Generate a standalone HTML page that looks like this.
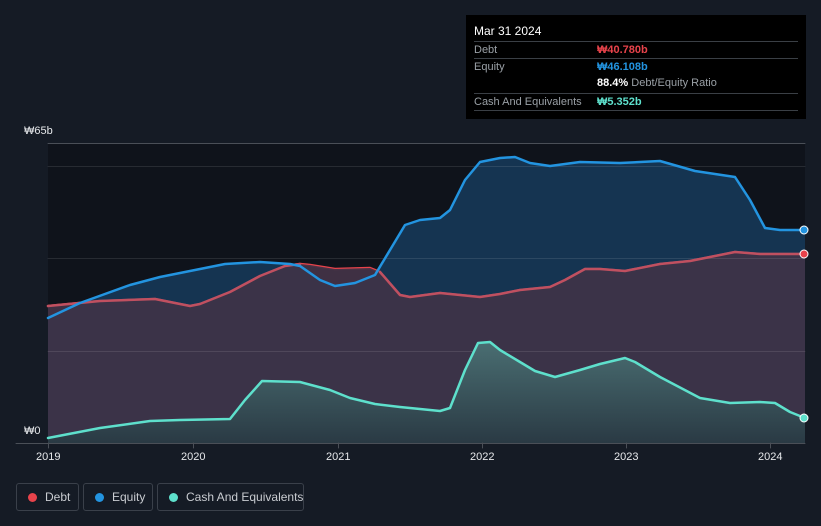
<!DOCTYPE html>
<html><head><meta charset="utf-8"><style>
html,body{margin:0;width:821px;height:526px;background:#151b25;font-family:"Liberation Sans","Noto Sans CJK KR",sans-serif;overflow:hidden;position:relative}
.tip{position:absolute;left:466px;top:15px;width:340px;height:104px;background:#000;color:#fff;font-size:11px}
.tip .r{position:absolute;left:8px;right:8px;height:17px;border-top:1px solid #3a3f45;color:#9aa0a6}
.tip span{position:absolute;left:123px}
.lg{position:absolute;top:483px;height:28px;border:1px solid #3a404a;border-radius:3px;color:#c9ccd1;font-size:12px;line-height:26px;box-sizing:border-box;white-space:nowrap}
.lg i{position:absolute;left:11px;top:9px;width:9px;height:9px;border-radius:50%}
.ax{position:absolute;color:#e6e8eb;font-size:11px}
</style></head><body>
<svg width="821" height="526" style="position:absolute;left:0;top:0" stroke-linejoin="round" stroke-linecap="round">
<rect x="48" y="143" width="757" height="300" fill="#0f131b"/>
<defs>
<linearGradient id="cg" x1="0" y1="0" x2="0" y2="1"><stop offset="0" stop-color="#4a6e72"/><stop offset="1" stop-color="#2a3a44"/></linearGradient>
</defs>
<path d="M48,306 L100,301 L155,299 L175,303 L190,306 L200,304 L230,292 L260,276 L285,266 L300,264 L310,265 L335,269 L370,268 L380,272 L400,295 L410,297 L440,293 L480,297 L500,294 L520,290 L550,287 L565,280 L585,269 L600,269 L625,271 L660,264 L690,261 L700,259 L735,252 L760,254 L805,254 L805,443 L48,443Z" fill="#5a2630"/>
<path d="M48,306 L100,301 L155,299 L175,303 L190,306 L200,304 L230,292 L260,276 L285,266 L300,264 L310,265 L335,269 L370,268 L380,272 L400,295 L410,297 L440,293 L480,297 L500,294 L520,290 L550,287 L565,280 L585,269 L600,269 L625,271 L660,264 L690,261 L700,259 L735,252 L760,254 L805,254" fill="none" stroke="#e8434b" stroke-width="2.5"/>
<path d="M48,318 L80,303 L130,285 L160,277 L190,271 L225,264 L260,262 L290,264 L300,266 L320,280 L335,286 L355,283 L375,275 L390,250 L405,225 L420,220 L440,218 L450,210 L465,180 L480,162 L500,158 L515,157 L530,163 L550,166 L580,162 L620,163 L660,161 L695,171 L735,177 L750,200 L765,228 L780,230 L805,230 L805,443 L48,443Z" fill="rgba(27,80,125,0.55)"/>
<path d="M48,306 L100,301 L155,299 L175,303 L190,306 L200,304 L230,292 L260,276 L285,266 L300,264 L310,265 L335,269 L370,268 L380,272 L400,295 L410,297 L440,293 L480,297 L500,294 L520,290 L550,287 L565,280 L585,269 L600,269 L625,271 L660,264 L690,261 L700,259 L735,252 L760,254 L805,254 L805,443 L48,443Z" fill="#3c3246" opacity="0.9"/>
<line x1="48" y1="143.5" x2="805" y2="143.5" stroke="#4a4f57"/>
<line x1="48" y1="166.5" x2="805" y2="166.5" stroke="rgba(255,255,255,0.1)"/>
<line x1="48" y1="258.5" x2="805" y2="258.5" stroke="rgba(255,255,255,0.1)"/>
<line x1="48" y1="351.5" x2="805" y2="351.5" stroke="rgba(255,255,255,0.1)"/>
<path d="M48,306 L100,301 L155,299 L175,303 L190,306 L200,304 L230,292 L260,276 L285,266 L300,264" fill="none" stroke="#c05060" stroke-width="2.5"/>
<path d="M380,272 L400,295 L410,297 L440,293 L480,297 L500,294 L520,290 L550,287 L565,280 L585,269 L600,269 L625,271 L660,264 L690,261 L700,259 L735,252 L760,254 L805,254" fill="none" stroke="#c05060" stroke-width="2.5"/>
<path d="M48,318 L80,303 L130,285 L160,277 L190,271 L225,264 L260,262 L290,264 L300,266 L320,280 L335,286 L355,283 L375,275 L390,250 L405,225 L420,220 L440,218 L450,210 L465,180 L480,162 L500,158 L515,157 L530,163 L550,166 L580,162 L620,163 L660,161 L695,171 L735,177 L750,200 L765,228 L780,230 L805,230" fill="none" stroke="#2394e0" stroke-width="2.5"/>
<path d="M48,438 L100,428 L150,421 L180,420 L230,419 L245,400 L262,381 L300,382 L330,390 L350,398 L375,404 L400,407 L440,411 L450,408 L465,370 L478,343 L490,342 L500,350 L520,362 L535,371 L555,377 L580,370 L600,364 L625,358 L635,362 L660,377 L700,398 L730,403 L760,402 L775,403 L790,412 L805,418 L805,443 L48,443Z" fill="url(#cg)"/>
<path d="M48,438 L100,428 L150,421 L180,420 L230,419 L245,400 L262,381 L300,382 L330,390 L350,398 L375,404 L400,407 L440,411 L450,408 L465,370 L478,343 L490,342 L500,350 L520,362 L535,371 L555,377 L580,370 L600,364 L625,358 L635,362 L660,377 L700,398 L730,403 L760,402 L775,403 L790,412 L805,418" fill="none" stroke="#5ee0cc" stroke-width="2.5"/>
<line x1="16" y1="443.5" x2="805" y2="443.5" stroke="#4a4f57"/>
<g stroke="#4a4f57"><line x1="48.5" y1="443" x2="48.5" y2="448"/><line x1="193.5" y1="443" x2="193.5" y2="448"/><line x1="338.5" y1="443" x2="338.5" y2="448"/><line x1="482.5" y1="443" x2="482.5" y2="448"/><line x1="626.5" y1="443" x2="626.5" y2="448"/><line x1="770.5" y1="443" x2="770.5" y2="448"/></g>
<circle cx="804" cy="230" r="4" fill="#2394e0" stroke="#fff" stroke-width="1"/>
<circle cx="804" cy="254" r="4" fill="#e8434b" stroke="#fff" stroke-width="1"/>
<circle cx="804" cy="418" r="4" fill="#5ee0cc" stroke="#fff" stroke-width="1"/>
</svg>
<div class="ax" style="left:24px;top:125px">₩65b</div>
<div class="ax" style="left:24px;top:425px">₩0</div>
<div class="ax" style="left:36px;top:451px">2019</div>
<div class="ax" style="left:181px;top:451px">2020</div>
<div class="ax" style="left:326px;top:451px">2021</div>
<div class="ax" style="left:470px;top:451px">2022</div>
<div class="ax" style="left:614px;top:451px">2023</div>
<div class="ax" style="left:758px;top:451px">2024</div>
<div class="tip">
<div style="position:absolute;left:8px;top:9px;font-size:12px">Mar 31 2024</div>
<div class="r" style="top:26px;line-height:17px">Debt<span style="color:#e8434b;font-weight:bold">₩40.780b</span></div>
<div class="r" style="top:43px;line-height:17px">Equity<span style="color:#2394e0;font-weight:bold">₩46.108b</span></div>
<div style="position:absolute;left:131px;top:62px;color:#9aa0a6"><b style="color:#fff">88.4%</b> Debt/Equity Ratio</div>
<div class="r" style="top:78px;line-height:17px">Cash And Equivalents<span style="color:#5ee0cc;font-weight:bold">₩5.352b</span></div>
<div class="r" style="top:95px"></div>
</div>
<div class="lg" style="left:16px;width:63px"><i style="background:#e8434b"></i><span style="position:absolute;left:28px">Debt</span></div>
<div class="lg" style="left:83px;width:70px"><i style="background:#2394e0"></i><span style="position:absolute;left:28px">Equity</span></div>
<div class="lg" style="left:157px;width:147px"><i style="background:#5ee0cc"></i><span style="position:absolute;left:28px">Cash And Equivalents</span></div>
</body></html>
